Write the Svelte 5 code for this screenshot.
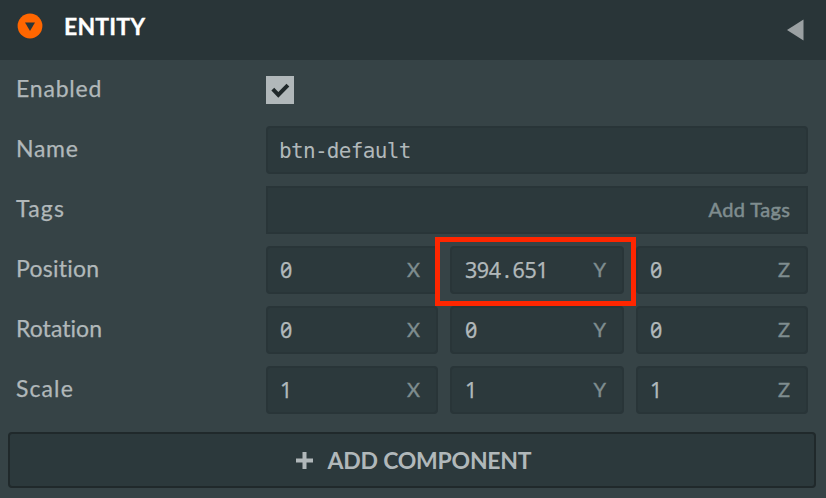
<script>
  const axes = ['X', 'Y', 'Z'];
  const vectors = [
    { name: 'Position', spacing: 0.25, values: ['0', '394.651', '0'] },
    { name: 'Rotation', spacing: 0.05, values: ['0', '0', '0'] },
    { name: 'Scale', spacing: 1.1, values: ['1', '1', '1'] }
  ];
</script>

<main class="panel">
  <header>
    <svg class="badge" width="26" height="26" viewBox="0 0 26 26">
      <circle cx="13" cy="13" r="12.4" fill="#ff6600" />
      <path d="M8 9.5h10L13 18z" fill="#293538" />
    </svg>
    <h1>ENTITY</h1>
    <svg class="collapse" width="17" height="22" viewBox="0 0 17 22">
      <path d="M0 11L16.5 .5v21z" fill="#9ba1a3" />
    </svg>
  </header>

  <section class="fields">
    <div class="row">
      <span class="label" style:letter-spacing="0.8px">Enabled</span>
      <div class="check">
        <svg width="28" height="28" viewBox="0 0 28 28">
          <path d="M6.8 13.2l5.5 5.7L21.9 9.1" fill="none" stroke="#20292b" stroke-width="4" />
        </svg>
      </div>
    </div>
    <div class="row">
      <span class="label" style:letter-spacing="0.7px">Name</span>
      <div class="input wide"><span class="mono">btn-default</span></div>
    </div>
    <div class="row">
      <span class="label" style:letter-spacing="1.2px">Tags</span>
      <div class="input wide tags"><span class="placeholder">Add Tags</span></div>
    </div>
    {#each vectors as vector}
      <div class="row">
        <span class="label" style:letter-spacing="{vector.spacing}px">{vector.name}</span>
        <div class="vector">
          {#each vector.values as value, i}
            <div class="input" class:second={i === 1}>
              <span class="number">{#each value.split('.') as part, n}{#if n}<span class="dot">.</span>{/if}{part}{/each}</span>
              <span class="axis">{axes[i]}</span>
              {#if value.includes('.')}<div class="highlight"></div>{/if}
            </div>
          {/each}
        </div>
      </div>
    {/each}
  </section>

  <button>
    <svg width="17" height="17" viewBox="0 0 17 17">
      <path d="M8.5 0v17M0 8.5h17" stroke="#b1b8ba" stroke-width="4" />
    </svg>
    <span>ADD COMPONENT</span>
  </button>
</main>

<style>
  :global(body) { background: #364346; }
  * { box-sizing: border-box; }
  .panel {
    width: 826px;
    height: 498px;
    overflow: hidden;
    background: #364346;
    color: #b1b8ba;
    font-family: Lato, sans-serif;
    font-variant-ligatures: no-common-ligatures;
  }
  header {
    height: 60px;
    padding: 0 22px 0 17px;
    display: flex;
    align-items: flex-start;
    background: #293538;
  }
  .badge { margin-top: 13px; }
  h1 {
    margin: 12px 0 0 21px;
    font-size: 23px;
    line-height: 28px;
    font-weight: 700;
    letter-spacing: 0.2px;
    color: #fff;
    -webkit-text-stroke: 0.3px #fff;
  }
  .collapse { margin: 19px 0 0 auto; }
  .fields {
    padding: 6px 18px 0 16px;
    display: flex;
    flex-direction: column;
    gap: 12px;
  }
  .row { height: 48px; display: flex; }
  .label {
    width: 250px;
    flex: none;
    font-size: 23px;
    line-height: 44px;
    -webkit-text-stroke: 0.25px #b1b8ba;
  }
  .check { width: 28px; height: 28px; margin-top: 10px; background: #b1b8ba; }
  .check svg { display: block; }
  .input {
    position: relative;
    height: 48px;
    padding: 0 16px 0 12px;
    display: flex;
    justify-content: space-between;
    border: 2px solid #293538;
    border-radius: 4px;
    background: #2c393c;
  }
  .wide { width: 542px; padding-left: 11px; }
  .tags { justify-content: flex-end; border-radius: 0; }
  .second { padding-left: 13px; }
  .vector { display: grid; grid-template-columns: 172px 174px 172px; gap: 12px; }
  .mono {
    font-family: "DejaVu Sans Mono", monospace;
    font-size: 21px;
    line-height: 47px;
    letter-spacing: -0.68px;
  }
  .number {
    font-family: "Noto Sans", sans-serif;
    font-feature-settings: "zero";
    font-size: 21.5px;
    line-height: 44px;
    letter-spacing: -0.45px;
    -webkit-text-stroke: 0.25px #b1b8ba;
  }
  .dot { display: inline-block; width: 12px; text-align: center; }
  .placeholder {
    font-size: 20px;
    line-height: 42px;
    letter-spacing: 0.4px;
    margin-right: -0.4px;
    color: #7f8d8f;
    -webkit-text-stroke: 0.5px #7f8d8f;
  }
  .axis {
    font-size: 20px;
    line-height: 42px;
    color: #7f8d8f;
    -webkit-text-stroke: 0.4px #7f8d8f;
  }
  .highlight {
    position: absolute;
    top: -11px;
    left: -17px;
    width: 201px;
    height: 69px;
    border: 5px solid #ff2600;
    z-index: 2;
  }
  button {
    width: 808px;
    height: 56px;
    margin: 18px 8px 0;
    padding: 0 0 0 3px;
    display: flex;
    align-items: center;
    justify-content: center;
    gap: 15px;
    border: 2px solid #20292b;
    border-radius: 4px;
    background: #2c393c;
    color: #b1b8ba;
    font: 700 23px/52px Lato, sans-serif;
    letter-spacing: -0.25px;
  }
</style>
